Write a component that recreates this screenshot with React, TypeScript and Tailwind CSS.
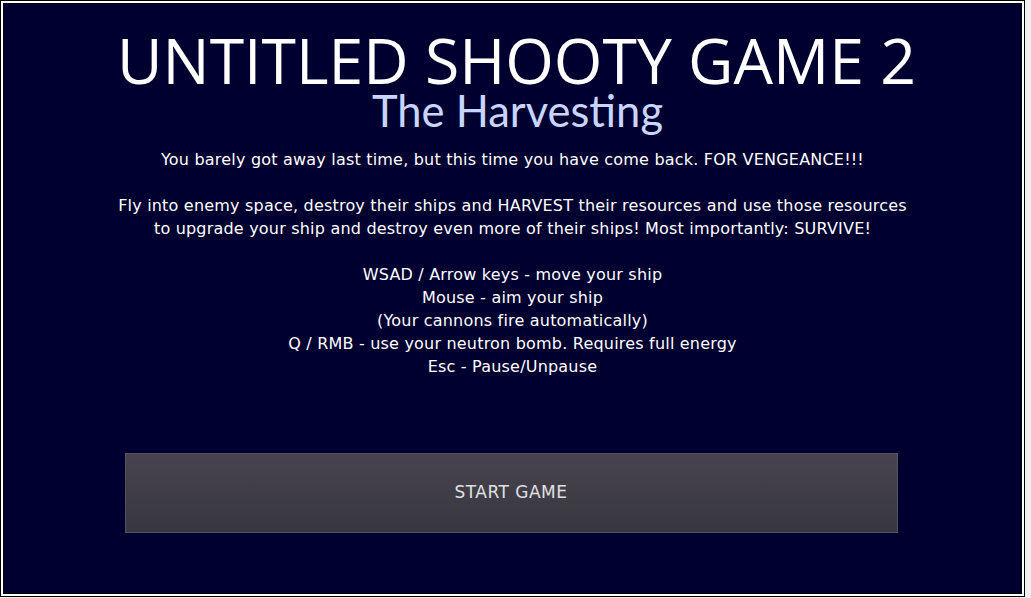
import React from 'react';

const controls = [
  'WSAD / Arrow keys - move your ship',
  'Mouse - aim your ship',
  '(Your cannons fire automatically)',
  'Q / RMB - use your neutron bomb. Requires full energy',
  'Esc - Pause/Unpause',
];

export default function App() {
  return (
    <div className="w-[1031px] h-[598px] bg-[#f0f0f0]">
      <div className="w-[1025px] h-[597px] border border-black">
        <div className="h-full border-2 border-white">
          <div className="h-full border border-black bg-[#000030] flex flex-col items-center">
            {/* Title */}
            <h1 className="mt-[26px] ml-[8px] text-white text-[62.5px] leading-[60px] font-['Open_Sans',sans-serif]">
              UNTITLED SHOOTY GAME 2
            </h1>
            <h2 className="ml-[10px] text-[#c8d6ff] text-[43.5px] leading-[40px] font-['Lato',sans-serif]">
              The Harvesting
            </h2>

            {/* Intro text */}
            <div className="mt-[18px] text-white text-center text-[16px] leading-[23px] tracking-[0.2px] font-['DejaVu_Sans',sans-serif]">
              <p>You barely got away last time, but this time you have come back. FOR VENGEANCE!!!</p>
              <p className="mt-[23px]">
                Fly into enemy space, destroy their ships and HARVEST their resources and use those resources
                <br />
                to upgrade your ship and destroy even more of their ships! Most importantly: SURVIVE!
              </p>
              <div className="mt-[23px]">
                {controls.map(line => (
                  <p key={line}>{line}</p>
                ))}
              </div>
            </div>

            {/* Start button */}
            <button className="mt-[75px] -ml-[3px] w-[773px] h-[80px] border border-[#55535d] bg-gradient-to-b from-[#47444f] to-[#38363f] text-[#e0e0e0] text-[17px] tracking-[0.5px] font-['DejaVu_Sans',sans-serif]">
              START GAME
            </button>
          </div>
        </div>
      </div>
    </div>
  );
}
